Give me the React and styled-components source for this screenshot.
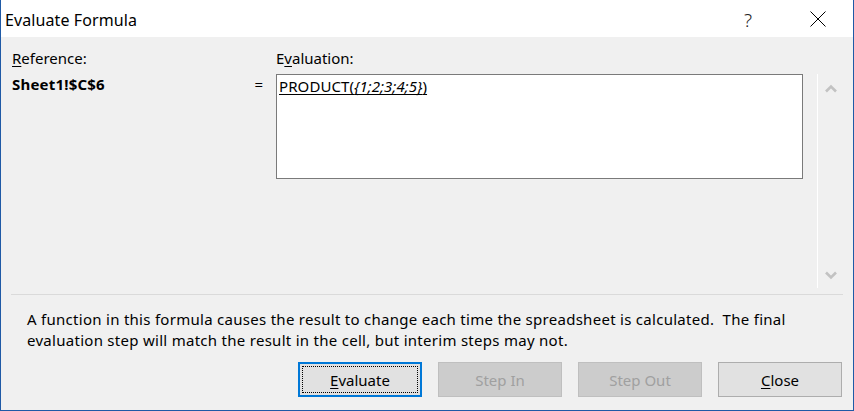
import React from 'react'
import styled, { createGlobalStyle, css } from 'styled-components'

const GlobalStyle = createGlobalStyle`
  html, body {
    margin: 0;
    padding: 0;
    background: #f0f0f0;
  }
  * {
    box-sizing: border-box;
  }
`

const FONT = `"Segoe UI", "Noto Sans", "Open Sans", sans-serif`

const Window = styled.div`
  width: 854px;
  height: 411px;
  display: flex;
  flex-direction: column;
  background: #f0f0f0;
  border: 1px solid #1f5aa6;
  border-top: none;
  font-family: ${FONT};
  color: #000;
  overflow: hidden;
`

const TitleBar = styled.div`
  height: 37px;
  flex: none;
  display: flex;
  align-items: center;
  background: #fff;
  padding-left: 4px;
`

const Title = styled.div`
  font-size: 16px;
  line-height: 20px;
  padding-top: 3px;
  letter-spacing: 0.1px;
`

const TitleControls = styled.div`
  margin-left: auto;
  display: flex;
  align-items: center;
  gap: 40px;
  padding-right: 20px;
`

const ControlButton = styled.div`
  width: 30px;
  height: 30px;
  display: flex;
  align-items: center;
  justify-content: center;
  font-size: 19px;
  font-weight: 300;
  color: #222;
  padding-top: ${(p) => (p.$glyph ? '2px' : '0')};
`

const Body = styled.div`
  flex: 1;
  padding: 11px 10px 0 10px;
  display: flex;
  flex-direction: column;
`

const TopArea = styled.div`
  height: 246px;
  display: flex;
`

const LeftPane = styled.div`
  width: 265px;
  display: flex;
  flex-direction: column;
  gap: 6px;
  padding-left: 1px;
`

const Label = styled.div`
  font-size: 15px;
  line-height: 20px;

  u {
    text-decoration-thickness: 1px;
    text-underline-offset: 2px;
  }
`

const RefRow = styled.div`
  display: flex;
  justify-content: space-between;
  align-items: center;
  padding-right: 13px;
  font-size: 15px;
  line-height: 20px;
`

const RefValue = styled.span`
  font-weight: 700;
  letter-spacing: 0.2px;
`

const EvalPane = styled.div`
  width: 527px;
  display: flex;
  flex-direction: column;
  gap: 6px;
`

const TextBox = styled.div`
  height: 105px;
  background: #fff;
  border: 1px solid #7a7a7a;
  padding: 1px 2px;
  font-size: 15px;
  line-height: 20px;
`

const FormulaText = styled.span`
  text-decoration: underline;
  text-decoration-thickness: 1px;
  text-underline-offset: 2px;
  letter-spacing: 0.1px;

  i {
    font-style: italic;
  }
`

const ScrollPane = styled.div`
  width: 26px;
  height: 214px;
  margin: 26px 0 0 14px;
  border-left: 1px solid #fff;
  display: flex;
  flex-direction: column;
  justify-content: space-between;
  align-items: center;
  padding: 10px 0 8px;
`

const Separator = styled.div`
  height: 1px;
  background: #dadada;
  flex: none;
`

const Message = styled.p`
  margin: 14px 0 0 16px;
  font-size: 15px;
  line-height: 21px;
  letter-spacing: 0.28px;
  white-space: nowrap;
`

const ButtonRow = styled.div`
  display: flex;
  justify-content: flex-end;
  gap: 16px;
  margin-top: 11px;
  padding-right: 1px;
`

const Button = styled.div`
  width: 124px;
  height: 35px;
  display: flex;
  align-items: center;
  justify-content: center;
  font-size: 15px;
  position: relative;
  background: #e1e1e1;
  border: 1px solid #adadad;
  color: #000;

  u {
    text-decoration-thickness: 1px;
    text-underline-offset: 2px;
  }

  ${(p) => p.$focused && css`
    border: 2px solid #0078d7;

    &::after {
      content: '';
      position: absolute;
      inset: 2px;
      border: 1px dotted #000;
    }
  `}

  ${(p) => p.$disabled && css`
    background: #cccccc;
    border-color: #bfbfbf;
    color: #a0a0a0;
  `}
`

const Chevron = ({ down }) => (
  <svg width="12" height="9" viewBox="0 0 12 9">
    <polyline
      points={down ? '1,1.5 6,6.5 11,1.5' : '1,7.5 6,2.5 11,7.5'}
      fill="none"
      stroke="#c2c2c2"
      strokeWidth="2.6"
    />
  </svg>
)

export default function App() {
  return (
    <>
      <GlobalStyle />
      <Window>
        <TitleBar>
          <Title>Evaluate Formula</Title>
          <TitleControls>
            <ControlButton $glyph>?</ControlButton>
            <ControlButton>
              <svg width="16" height="16" viewBox="0 0 16 16">
                <path d="M0.5 0.5 L15.5 15.5 M15.5 0.5 L0.5 15.5" stroke="#000" strokeWidth="1" />
              </svg>
            </ControlButton>
          </TitleControls>
        </TitleBar>

        <Body>
          <TopArea>
            <LeftPane>
              <Label><u>R</u>eference:</Label>
              <RefRow>
                <RefValue>Sheet1!$C$6</RefValue>
                <span>=</span>
              </RefRow>
            </LeftPane>

            <EvalPane>
              <Label>E<u>v</u>aluation:</Label>
              <TextBox>
                <FormulaText>PRODUCT(<i>{'{1;2;3;4;5}'}</i>)</FormulaText>
              </TextBox>
            </EvalPane>

            <ScrollPane>
              <Chevron />
              <Chevron down />
            </ScrollPane>
          </TopArea>

          <Separator />

          <Message>
            A function in this formula causes the result to change each time the spreadsheet is calculated.&nbsp; The final
            <br />
            evaluation step will match the result in the cell, but interim steps may not.
          </Message>

          <ButtonRow>
            <Button $focused><span><u>E</u>valuate</span></Button>
            <Button $disabled>Step In</Button>
            <Button $disabled>Step Out</Button>
            <Button><span><u>C</u>lose</span></Button>
          </ButtonRow>
        </Body>
      </Window>
    </>
  )
}
